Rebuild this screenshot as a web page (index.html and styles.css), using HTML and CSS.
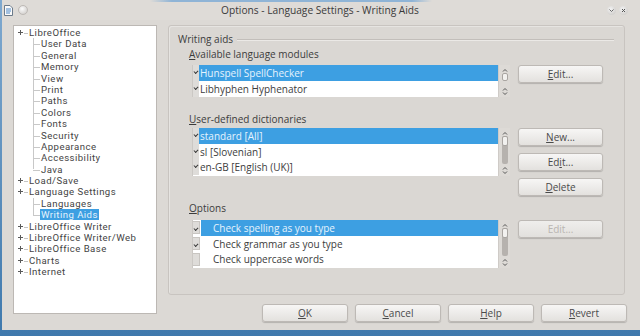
FILE: index.html
```html
<!DOCTYPE html>
<html lang="en">
<head>
  <meta charset="UTF-8">
  <title>Options - Language Settings - Writing Aids</title>
  <link rel="stylesheet" href="styles.css">
</head>
<body>
  <div class="window">
    <div class="titlebar">
      <div class="tb-left">
        <svg width="9" height="11" viewBox="0 0 9 11"><path d="M0.5 0.5h5.5l2.5 2.5v7.5h-8z" fill="#fafafa" stroke="#6b7a8a"/><path d="M2 4h5M2 6h5M2 8h4" stroke="#4a86c5"/></svg>
        <span class="tb-dot"></span>
      </div>
      <div class="tb-title">Options - Language Settings - Writing Aids</div>
      <div class="tb-right">
        <span class="tb-btn"><svg width="9" height="9" viewBox="0 0 9 9"><path d="M2.5 3.5l2 2 2-2" fill="none" stroke="#666"/></svg></span>
        <span class="tb-btn"><svg width="9" height="9" viewBox="0 0 9 9"><path d="M3 3l3 3M6 3l-3 3" fill="none" stroke="#555"/></svg></span>
      </div>
    </div>

    <div class="content">
      <div class="tree">
        <div class="node top">LibreOffice</div>
        <div class="children">
          <div class="node child">User Data</div>
          <div class="node child">General</div>
          <div class="node child">Memory</div>
          <div class="node child">View</div>
          <div class="node child">Print</div>
          <div class="node child">Paths</div>
          <div class="node child">Colors</div>
          <div class="node child">Fonts</div>
          <div class="node child">Security</div>
          <div class="node child">Appearance</div>
          <div class="node child">Accessibility</div>
          <div class="node child">Java</div>
        </div>
        <div class="node top">Load/Save</div>
        <div class="node top">Language Settings</div>
        <div class="children">
          <div class="node child">Languages</div>
          <div class="node child"><span class="tree-sel">Writing Aids</span></div>
        </div>
        <div class="node top">LibreOffice Writer</div>
        <div class="node top">LibreOffice Writer/Web</div>
        <div class="node top">LibreOffice Base</div>
        <div class="node top">Charts</div>
        <div class="node top">Internet</div>
      </div>

      <div class="right">
        <div class="page">
          <div class="frame-head">
            <span>Writing aids</span>
            <span class="frame-line"></span>
          </div>

          <div class="section sec-modules">
            <div class="sec-label"><u>A</u>vailable language modules</div>
            <div class="sec-body">
              <div class="list list-2">
                <div class="rows">
                  <div class="row sel"><span class="check on"></span><span class="text">Hunspell SpellChecker</span></div>
                  <div class="row"><span class="check on"></span><span class="text">Libhyphen Hyphenator</span></div>
                </div>
                <div class="scroll">
                  <span class="arr up"></span>
                  <div class="track short"><span class="thumb"></span></div>
                  <span class="arr up"></span>
                  <span class="arr down"></span>
                </div>
              </div>
              <div class="btns">
                <div class="btn"><u>E</u>dit...</div>
              </div>
            </div>
          </div>

          <div class="section sec-dicts">
            <div class="sec-label"><u>U</u>ser-defined dictionaries</div>
            <div class="sec-body">
              <div class="list list-3">
                <div class="rows">
                  <div class="row sel"><span class="check on"></span><span class="text">standard [All]</span></div>
                  <div class="row"><span class="check on"></span><span class="text">sl [Slovenian]</span></div>
                  <div class="row"><span class="check on"></span><span class="text">en-GB [English (UK)]</span></div>
                </div>
                <div class="scroll">
                  <span class="arr up"></span>
                  <div class="track"><span class="thumb"></span></div>
                  <span class="arr up"></span>
                  <span class="arr down"></span>
                </div>
              </div>
              <div class="btns">
                <div class="btn"><u>N</u>ew...</div>
                <div class="btn">Ed<u>i</u>t...</div>
                <div class="btn"><u>D</u>elete</div>
              </div>
            </div>
          </div>

          <div class="section sec-options">
            <div class="sec-label"><u>O</u>ptions</div>
            <div class="sec-body">
              <div class="list list-3 opts">
                <div class="rows">
                  <div class="row sel"><span class="check on"></span><span class="text">Check spelling as you type</span></div>
                  <div class="row"><span class="check on"></span><span class="text">Check grammar as you type</span></div>
                  <div class="row"><span class="check"></span><span class="text">Check uppercase words</span></div>
                </div>
                <div class="scroll">
                  <span class="arr up"></span>
                  <div class="track"><span class="thumb"></span></div>
                  <span class="arr up"></span>
                  <span class="arr down"></span>
                </div>
              </div>
              <div class="btns">
                <div class="btn disabled">Edit...</div>
              </div>
            </div>
          </div>
        </div>

        <div class="footer">
          <div class="btn wide"><u>O</u>K</div>
          <div class="btn wide"><u>C</u>ancel</div>
          <div class="btn wide"><u>H</u>elp</div>
          <div class="btn wide"><u>R</u>evert</div>
        </div>
      </div>
    </div>
  </div>
</body>
</html>
```

FILE: styles.css
```css
body {
  margin: 0;
  width: 640px;
  height: 336px;
  overflow: hidden;
  background: linear-gradient(#7fa9cf, #3f79ad);
  font-family: "Open Sans", "DejaVu Sans", sans-serif;
  font-size: 10px;
  color: #3c3c3c;
}
u {
  text-decoration: underline;
  text-underline-offset: 1px;
}

.window {
  width: 638px;
  height: 330px;
  margin-left: 2px;
  background: #dcd9d5;
  display: flex;
  flex-direction: column;
}

/* title bar */
.titlebar {
  height: 20px;
  display: flex;
  align-items: center;
  padding: 0 12px 0 2px;
  background:
    linear-gradient(to right, transparent 148px, #8fb4d6 170px, #8fb4d6 410px, transparent 430px) top / 100% 2px no-repeat,
    #dedbd7;
}
.tb-left {
  width: 60px;
  display: flex;
  align-items: center;
  gap: 5px;
}
.tb-dot {
  width: 8px;
  height: 8px;
  border-radius: 50%;
  background: radial-gradient(circle at 40% 35%, #fbfbfb, #c9c6c3);
  border: 1px solid #bdb9b5;
}
.tb-title {
  flex: 1;
  text-align: center;
  font-size: 10.2px;
  color: #3a3a3a;
  padding-right: 24px;
}
.tb-right {
  width: 28px;
  display: flex;
  gap: 3px;
  justify-content: flex-end;
}
.tb-btn {
  width: 9px;
  height: 9px;
  border-radius: 50%;
  background: radial-gradient(circle at 40% 35%, #f3f3f3, #c7c4c1);
  display: flex;
}

.content {
  display: flex;
  padding: 5px 13px 0 11px;
  gap: 11px;
}

/* tree */
.tree {
  width: 142px;
  height: 286px;
  background: #fff;
  border: 1px solid #bcb8b4;
  padding-top: 1px;
  box-sizing: content-box;
  font-family: Roboto, "Open Sans", sans-serif;
  font-size: 9.6px;
  letter-spacing: 0.45px;
  color: #444;
}
.node {
  position: relative;
  height: 11.4px;
  line-height: 11.4px;
  white-space: nowrap;
}
.node.top {
  padding-left: 15px;
}
.node.top::before {
  content: '';
  position: absolute;
  left: 4px;
  top: 3px;
  width: 5px;
  height: 5px;
  background:
    linear-gradient(#5a5a5a, #5a5a5a) center / 5px 1px no-repeat,
    linear-gradient(#5a5a5a, #5a5a5a) center / 1px 5px no-repeat;
}
.node.top::after {
  content: '';
  position: absolute;
  left: 10px;
  top: 6px;
  width: 4px;
  border-top: 1px solid #c4c4c4;
}
.children {
  margin-left: 19px;
}
.node.child {
  padding-left: 8px;
}
.node.child::before {
  content: '';
  position: absolute;
  left: 0;
  top: 0;
  bottom: 0;
  border-left: 1px solid #c8c8c8;
}
.node.child:last-child::before {
  bottom: 50%;
}
.node.child::after {
  content: '';
  position: absolute;
  left: 0;
  top: 6px;
  width: 7px;
  border-top: 1px solid #c8c8c8;
}
.tree-sel {
  background: #3d9fe2;
  color: #e4f2fc;
  padding: 0 1px;
  margin-left: -1px;
  display: inline-block;
  line-height: 11px;
}

/* right side */
.right {
  width: 459px;
  display: flex;
  flex-direction: column;
}
.page {
  width: 457px;
  height: 270px;
  box-sizing: border-box;
  border: 1px solid #c8c4c0;
  border-radius: 3px;
  background: #dad7d3;
  box-shadow: inset 1px 1px 0 #e6e4e1;
  padding: 7px 10px 0 9px;
}
.frame-head {
  display: flex;
  align-items: center;
  height: 12px;
  line-height: 12px;
}
.frame-line {
  flex: 1;
  margin-left: 4px;
  border-top: 1px solid #c2beba;
  box-shadow: 0 1px 0 #ebe9e6;
}

.section {
  padding-left: 11px;
}
.sec-label {
  height: 14px;
  line-height: 14px;
}
.sec-modules {
  margin-top: 2px;
}
.sec-dicts {
  margin-top: 15px;
}
.sec-options {
  margin-top: 5px;
}
.sec-body {
  display: flex;
  align-items: flex-start;
  gap: 8px;
  padding-left: 3px;
}
.sec-modules .sec-body {
  margin-top: 4px;
}
.sec-dicts .sec-body {
  margin-top: 2px;
}
.sec-options .sec-body {
  margin-top: 5px;
}

/* list boxes */
.list {
  width: 318px;
  display: flex;
  background: #fff;
  border-left: 1px solid #cbc8c4;
  box-sizing: border-box;
}
.list-2 { height: 32px; }
.list-3 { height: 48px; }
.rows {
  flex: 1;
  display: flex;
  flex-direction: column;
}
.row {
  height: 16px;
  display: flex;
  align-items: center;
}
.list-3 .row {
  height: 15.7px;
}
.check {
  width: 6px;
  height: 100%;
  background: #dedcd9;
  position: relative;
}
.check.on::after {
  content: '';
  position: absolute;
  left: 1px;
  top: 5px;
  width: 3px;
  height: 2px;
  border-left: 1.5px solid #3a3a3a;
  border-bottom: 1.5px solid #3a3a3a;
  transform: rotate(-45deg);
}
.opts .check {
  height: 11px;
  margin-right: 1px;
  border: 1px solid #c8c5c1;
  border-left: none;
}
.text {
  flex: 1;
  height: 100%;
  line-height: 16px;
  padding-left: 1px;
  white-space: nowrap;
}
.opts .text {
  padding-left: 12px;
}
.row.sel .text {
  background: #3d9fe2;
  color: #e6f3fd;
}

.scroll {
  width: 12px;
  background: #dddad6;
  border-left: 1px solid #cfcbc7;
  display: flex;
  flex-direction: column;
  align-items: center;
  padding: 2px 0 1px;
  box-sizing: border-box;
}
.arr {
  width: 6px;
  height: 5px;
  flex: none;
  background: no-repeat center / 6px 4px;
}
.arr.up {
  background-image: url("data:image/svg+xml,%3Csvg xmlns='http://www.w3.org/2000/svg' width='6' height='4'%3E%3Cpath d='M1 3.5l2-2 2 2' fill='none' stroke='%23555' stroke-width='1'/%3E%3C/svg%3E");
}
.arr.down {
  background-image: url("data:image/svg+xml,%3Csvg xmlns='http://www.w3.org/2000/svg' width='6' height='4'%3E%3Cpath d='M1 0.5l2 2 2-2' fill='none' stroke='%23555' stroke-width='1'/%3E%3C/svg%3E");
}
.track {
  flex: 1;
  width: 6px;
  margin: 1px 0;
  background: #b6b2ae;
  border-radius: 2px;
  display: flex;
}
.track.short {
  background: none;
}
.thumb {
  width: 6px;
  height: 8px;
  box-sizing: border-box;
  border: 1px solid #a9a5a1;
  border-radius: 2px;
  background: #f2f1ef;
}
.list-3 .thumb {
  height: 10px;
}

/* buttons */
.btns {
  display: flex;
  flex-direction: column;
  gap: 7px;
}
.btn {
  width: 85px;
  height: 18px;
  box-sizing: border-box;
  border: 1px solid #bdb9b5;
  border-radius: 3px;
  background: linear-gradient(#f7f6f5, #e3e1de);
  box-shadow: 0 1px 1px rgba(0, 0, 0, 0.18);
  text-align: center;
  line-height: 16px;
  color: #4a4a4a;
}
.btn.disabled {
  color: #b9b5b1;
  background: linear-gradient(#efeeec, #e2e0dd);
}
.footer {
  display: flex;
  justify-content: flex-end;
  gap: 7px;
  margin-top: 9px;
}
.btn.wide {
  width: 86px;
}
```
